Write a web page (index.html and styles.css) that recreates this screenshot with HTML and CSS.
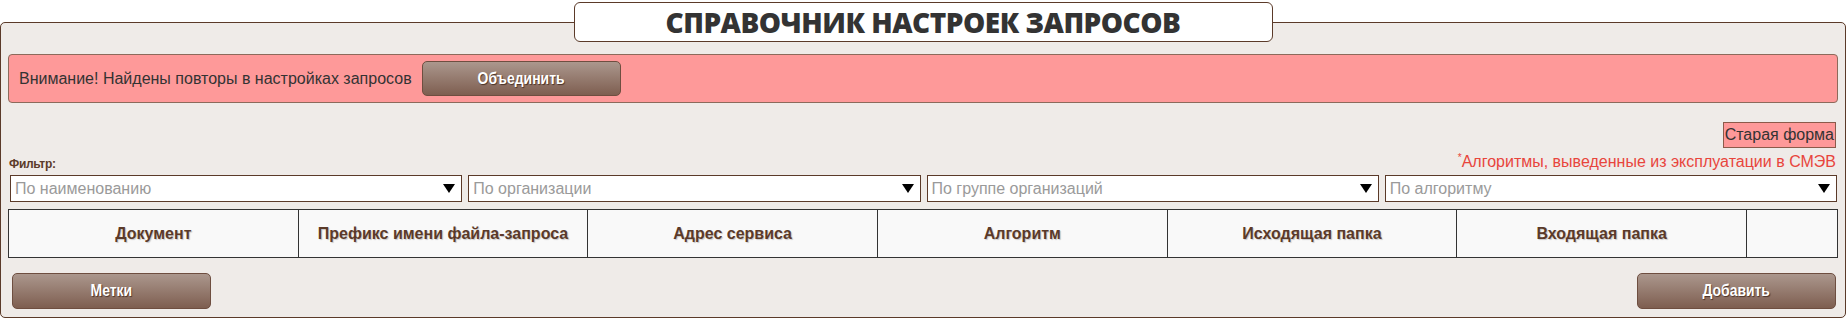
FILE: index.html
```html
<!DOCTYPE html>
<html lang="ru">
<head>
<meta charset="UTF-8" />
<meta name="viewport" content="width=device-width, initial-scale=1.0"/>
<title>Справочник настроек запросов</title>
<link rel="stylesheet" href="styles.css">
</head>
<body>

<fieldset class="panel">
  <legend class="panel-title">СПРАВОЧНИК НАСТРОЕК ЗАПРОСОВ</legend>

  <div class="alert">
    <span>Внимание! Найдены повторы в настройках запросов</span>
    <button class="btn btn-merge"><span>Объединить</span></button>
  </div>

  <div class="old-form-row">
    <span class="old-form">Старая форма</span>
  </div>

  <div class="filter-head">
    <span class="filter-label">Фильтр:</span>
    <span class="legacy-note"><sup>*</sup>Алгоритмы, выведенные из эксплуатации в СМЭВ</span>
  </div>

  <div class="filters">
    <div class="combo"><span>По наименованию</span><svg width="12" height="9" viewBox="0 0 12 9"><path d="M0 0H12L6 9Z"/></svg></div>
    <div class="combo"><span>По организации</span><svg width="12" height="9" viewBox="0 0 12 9"><path d="M0 0H12L6 9Z"/></svg></div>
    <div class="combo"><span>По группе организаций</span><svg width="12" height="9" viewBox="0 0 12 9"><path d="M0 0H12L6 9Z"/></svg></div>
    <div class="combo"><span>По алгоритму</span><svg width="12" height="9" viewBox="0 0 12 9"><path d="M0 0H12L6 9Z"/></svg></div>
  </div>

  <table class="grid">
    <tr>
      <th>Документ</th>
      <th>Префикс имени файла-запроса</th>
      <th>Адрес сервиса</th>
      <th>Алгоритм</th>
      <th>Исходящая папка</th>
      <th>Входящая папка</th>
      <th class="col-actions"></th>
    </tr>
  </table>

  <div class="footer">
    <button class="btn"><span>Метки</span></button>
    <button class="btn"><span>Добавить</span></button>
  </div>
</fieldset>

</body>
</html>
```

FILE: styles.css
```css
body {
  margin: 0;
  padding-top: 2px;
  background: #fff;
  font-family: "Liberation Sans", Arial, sans-serif;
  font-size: 16px;
  color: #333;
}
.panel {
  margin: 0;
  padding: 0 7px 8px 7px;
  border: 1px solid #5b3a29;
  border-radius: 5px;
  background: #efebe8;
  min-inline-size: 0;
}
.panel-title {
  margin: 0 auto;
  width: 697px;
  height: 38px;
  padding: 0;
  box-sizing: content-box;
  border: 1px solid #5b3a29;
  border-radius: 6px;
  background: #fff;
  text-align: center;
  font-family: "Open Sans", sans-serif;
  font-weight: 800;
  font-size: 28px;
  line-height: 38px;
  color: #333;
  letter-spacing: -0.5px;
}
.alert {
  margin-top: 12px;
  height: 47px;
  display: flex;
  align-items: center;
  gap: 10px;
  padding-left: 10px;
  background: #fe9999;
  border: 1px solid #8c6a5b;
  border-radius: 4px;
}
.btn {
  width: 199px;
  height: 36px;
  border: 1px solid #6e4e40;
  border-radius: 5px;
  background: linear-gradient(#ab978d, #7e5e50);
  color: #fff;
  font-family: "Liberation Sans", Arial, sans-serif;
  font-weight: bold;
  font-size: 17px;
  text-shadow: 1px 1px 1px #4a3228;
  cursor: pointer;
}
.btn span {
  display: inline-block;
  transform: scaleX(0.82);
}
.btn-merge {
  height: 35px;
}
.old-form-row {
  margin-top: 19px;
  display: flex;
  justify-content: flex-end;
  padding-right: 2px;
}
.old-form {
  background: #fe9999;
  border: 1px solid #8c5a4a;
  padding: 1px 1px;
  line-height: 22px;
  font-size: 16px;
}
.filter-head {
  display: flex;
  justify-content: space-between;
  align-items: flex-end;
  margin-top: -1px;
  height: 24px;
  padding-right: 2px;
}
.filter-label {
  font-weight: bold;
  font-size: 12px;
  letter-spacing: -0.3px;
  color: #5b3a29;
  padding-left: 1px;
}
.legacy-note {
  color: #e8453c;
  font-size: 16px;
  line-height: 18px;
}
.legacy-note sup {
  font-size: 10px;
}
.filters {
  margin-top: 4px;
  display: grid;
  grid-template-columns: repeat(4, 1fr);
  gap: 6px;
  padding: 0 1px 0 2px;
}
.combo {
  height: 27px;
  box-sizing: border-box;
  display: flex;
  align-items: center;
  justify-content: space-between;
  padding: 0 6px 0 4px;
  background: #fff;
  border: 1px solid #5b3a29;
  color: #9a9a9a;
  font-size: 16px;
}
.combo svg {
  fill: #000;
}
.grid {
  margin-top: 7px;
  width: 100%;
  border-collapse: collapse;
  table-layout: fixed;
}
.grid th {
  height: 47px;
  padding: 0;
  border: 1px solid #333;
  background: #f9f9f9;
  color: #5b3a29;
  font-size: 16px;
  font-weight: bold;
  text-shadow: 1px 1px 1px rgba(0, 0, 0, 0.2);
}
.grid .col-actions {
  width: 90px;
}
.footer {
  margin-top: 15px;
  display: flex;
  justify-content: space-between;
  padding: 0 2px 0 4px;
}
```
